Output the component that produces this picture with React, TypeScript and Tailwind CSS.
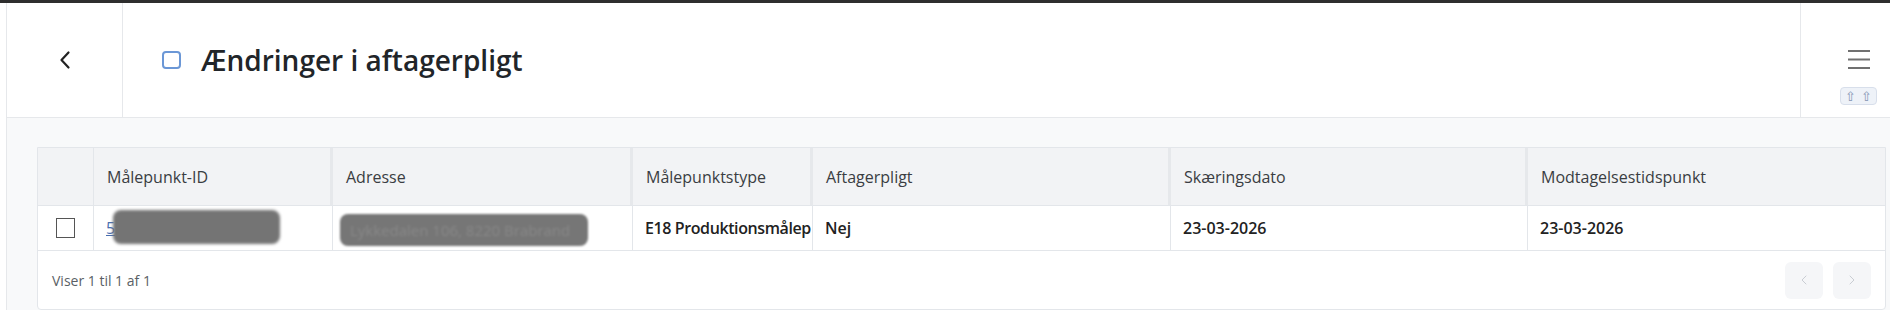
import { ChevronLeft, ChevronRight } from 'lucide-react'

const font = { fontFamily: '"Open Sans", "Noto Sans", sans-serif' }

const cols = 'grid grid-cols-[56px_239px_300px_180px_358px_357px_357px]'

const headers = ['Målepunkt-ID', 'Adresse', 'Målepunktstype', 'Aftagerpligt', 'Skæringsdato', 'Modtagelsestidspunkt']

function PageHeader() {
  return (
    <header className="flex h-[115px] border-b border-[#e6e8eb] bg-white">
      <div className="flex w-[116px] items-center justify-center border-r border-[#e6e8eb]">
        <svg width="14" height="20" viewBox="0 0 14 20" fill="none">
          <path d="M10.5 2.5 3.5 10l7 7.5" stroke="#222" strokeWidth="2.2" strokeLinecap="round" strokeLinejoin="round" />
        </svg>
      </div>

      <div className="flex flex-1 items-center pl-[39px]">
        <span className="h-[18px] w-[19px] rounded-[4px] border-2 border-[#6b97d6]" />
        <h1 className="ml-[20px] text-[28px] font-semibold leading-none text-[#212529]">
          Ændringer i aftagerpligt
        </h1>
      </div>

      <div className="flex w-[90px] justify-end border-l border-[#e6e8eb] pr-[13px]">
        <div className="flex w-[37px] flex-col items-center pt-[46px]">
          <svg width="22" height="20" viewBox="0 0 22 20">
            <path d="M0 2h22M0 10.5h22M0 19h22" stroke="#707070" strokeWidth="2" />
          </svg>
          <div className="mt-[18px] flex h-[18px] w-[37px] items-center justify-center gap-[5px] rounded-[4px] border border-[#d8dfeb] bg-[#eef2f8] text-[13px] leading-none text-[#8495b3]">
            <span>⇧</span>
            <span>⇧</span>
          </div>
        </div>
      </div>
    </header>
  )
}

function ResultTable() {
  return (
    <div className="w-[1849px] overflow-hidden rounded-b-[4px] border border-[#e3e6ea] bg-white">
      <div className={`${cols} h-[58px] border-b border-[#e3e6ea] bg-[#f2f3f5] text-[16px] text-[#3a3d42]`}>
        <div className="border-r border-[#e3e6ea]" />
        {headers.map((h, i) => (
          <div
            key={h}
            className={`flex items-center overflow-hidden whitespace-nowrap pl-[13px] ${i < headers.length - 1 ? 'border-r-[3px] border-[#e6e8eb]' : ''}`}
          >
            {h}
          </div>
        ))}
      </div>

      <div className={`${cols} h-[45px] border-b border-[#e3e6ea] text-[16px] font-semibold text-[#222]`}>
        <div className="flex items-center justify-center border-r border-[#e3e6ea]">
          <span className="h-[20px] w-[19px] border border-[#555] bg-white" />
        </div>
        <div className="relative flex items-center border-r border-[#e3e6ea] pl-[12px]">
          <span className="font-normal text-[#4a6fb0] underline">5</span>
          <div className="absolute left-[19px] top-[4px] h-[34px] w-[167px] rounded-[8px] bg-[#747474] blur-[1.5px]" />
        </div>
        <div className="relative flex items-center border-r border-[#e3e6ea]">
          <div className="absolute left-[7px] top-[8px] flex h-[32px] w-[248px] items-center overflow-hidden whitespace-nowrap rounded-[8px] bg-[#767676] pl-[10px] text-[15px] font-normal text-[#888] blur-[1.2px]">
            Lykkedalen 106, 8220 Brabrand
          </div>
        </div>
        <div className="flex items-center overflow-hidden whitespace-nowrap border-r border-[#e3e6ea] pl-[12px] tracking-[-0.4px]">E18 Produktionsmålep</div>
        <div className="flex items-center border-r border-[#e3e6ea] pl-[12px]">Nej</div>
        <div className="flex items-center border-r border-[#e3e6ea] pl-[12px]">23-03-2026</div>
        <div className="flex items-center pl-[12px]">23-03-2026</div>
      </div>

      <div className="flex h-[58px] items-center justify-between pl-[14px] pr-[14px]">
        <span className="text-[14px] text-[#5a5f66]">Viser 1 til 1 af 1</span>
        <div className="flex gap-[10px]">
          <button className="flex h-[37px] w-[38px] items-center justify-center rounded-[6px] bg-[#f5f6f8] text-[#c9cdd3]">
            <ChevronLeft size={16} strokeWidth={1.5} />
          </button>
          <button className="flex h-[37px] w-[38px] items-center justify-center rounded-[6px] bg-[#f5f6f8] text-[#c9cdd3]">
            <ChevronRight size={16} strokeWidth={1.5} />
          </button>
        </div>
      </div>
    </div>
  )
}

export default function App() {
  return (
    <div className="flex h-[310px] w-[1890px] flex-col overflow-hidden bg-[#f8f9fa]" style={font}>
      <div className="h-[3px] bg-[#2e2e2e]" />
      <div className="flex flex-1">
        <div className="w-[7px] border-r border-[#e6e8eb] bg-white" />
        <div className="flex flex-1 flex-col">
          <PageHeader />
          <main className="pl-[30px] pt-[29px]">
            <ResultTable />
          </main>
        </div>
      </div>
    </div>
  )
}
